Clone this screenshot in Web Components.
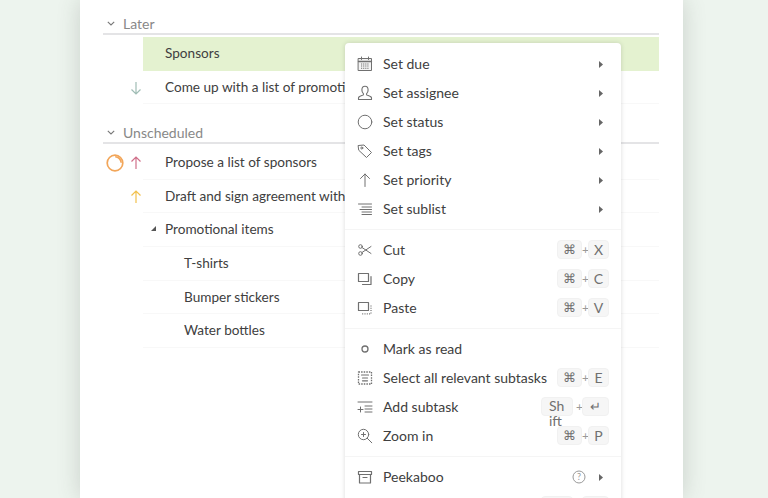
<!DOCTYPE html>
<html><head><meta charset="utf-8">
<style>
html,body{margin:0;padding:0;height:100%;overflow:hidden;background:#edf4ee;font-family:Lato,"Liberation Sans",sans-serif;color:#333}
</style></head><body>
<x-page>
<x-section label="Later">
  <x-row selected>Sponsors</x-row>
  <x-row pri="down">Come up with a list of promotional items</x-row>
</x-section>
<x-section label="Unscheduled">
  <x-row pri="red" timer>Propose a list of sponsors</x-row>
  <x-row pri="yellow">Draft and sign agreement with sponsors</x-row>
  <x-row caret>Promotional items</x-row>
  <x-row sub>T-shirts</x-row>
  <x-row sub>Bumper stickers</x-row>
  <x-row sub>Water bottles</x-row>
</x-section>
<x-menu slot="overlay">
  <x-item icon="cal" arrow>Set due</x-item>
  <x-item icon="user" arrow>Set assignee</x-item>
  <x-item icon="circle" arrow>Set status</x-item>
  <x-item icon="tag" arrow>Set tags</x-item>
  <x-item icon="up" arrow>Set priority</x-item>
  <x-item icon="sublist" arrow>Set sublist</x-item>
  <x-sep></x-sep>
  <x-item icon="cut" keys="⌘|X">Cut</x-item>
  <x-item icon="copy" keys="⌘|C">Copy</x-item>
  <x-item icon="paste" keys="⌘|V">Paste</x-item>
  <x-sep></x-sep>
  <x-item icon="dot">Mark as read</x-item>
  <x-item icon="selall" keys="⌘|E">Select all relevant subtasks</x-item>
  <x-item icon="add" keys="Shift|↵">Add subtask</x-item>
  <x-item icon="zoom" keys="⌘|P">Zoom in</x-item>
  <x-sep></x-sep>
  <x-item icon="box" help arrow>Peekaboo</x-item>
  <x-item keys="|"></x-item>
</x-menu>
</x-page>
<script>
const S='fill="none" stroke="#707070" stroke-width="1" stroke-linecap="round" stroke-linejoin="round"';
const svg=(b,w=16,h=16)=>`<svg width="${w}" height="${h}" viewBox="0 0 16 16" ${S}>${b}</svg>`;
const ICONS={
cal:svg('<rect x="1.500" y="2.500" width="13" height="12" fill="#f3f3f3"/><path d="M1.500 5.500h13" stroke-width="1.300"/><path d="M4.500 1v2.500M11.500 1v2.500"/><path d="M4 8h8M4 10h8M4 12.300h8" stroke-dasharray="1.200 .9" stroke-linecap="butt" stroke-width="1.100"/>'),
user:svg('<path d="M4.900 5C4.900 2.700 6.200 1.300 8 1.300s3.100 1.400 3.100 3.700c0 1.600-.7 3-1.500 3.700v1c0 .8 4.900 1.200 4.900 3.200v1.600H1.500V12.900c0-2 4.900-2.400 4.900-3.200v-1C5.600 8 4.900 6.600 4.900 5Z" stroke-width="1.100"/>'),
circle:svg('<circle cx="8" cy="8" r="6.800"/>'),
tag:svg('<path d="M1.500 2.500 7 2l7.500 7.500-5 5L2 7.500Z"/><circle cx="4.800" cy="5" r="1"/>'),
up:svg('<path d="M8 14.500V2M3.500 6.500 8 2l4.500 4.500"/>'),
sublist:svg('<path d="M1.500 3h13M5 6h9.500M3 8.500h11.500M5 11h9.500M5 13.500h9.500"/>'),
cut:svg('<circle cx="3.500" cy="4.500" r="1.800"/><circle cx="3.500" cy="11.500" r="1.800"/><path d="M5 5.500l9 6M5 10.500l9-6"/>'),
copy:svg('<rect x="1.500" y="2.500" width="10" height="8" stroke-width="1.200"/><path d="M14 5.500v8H5.500" stroke-width="1.200"/>'),
paste:svg('<rect x="1.500" y="2.500" width="10" height="8" stroke-width="1.200"/><path d="M14 5.500v8.300H4" stroke-dasharray="1 1.300" stroke-linecap="butt" stroke-width="1.200"/>'),
dot:svg('<circle cx="8" cy="8" r="3" stroke-width="1.300"/>'),
selall:svg('<rect x="1.500" y="2" width="13" height="12" stroke-dasharray="1.500 1.100" stroke-linecap="butt" stroke-width="1.300"/><path d="M4.500 5h7M5.500 8h5M5.500 10.800h5" stroke-width="1.200"/>'),
add:svg('<path d="M1 3h14M8 7h7M8 10h7M8 13h7M1 10.500h5M3.500 8v5"/>'),
zoom:svg('<circle cx="6.500" cy="6.500" r="5.200"/><path d="M10.200 10.200 14.800 14.800M6.500 4.500v4M4.500 6.500h4"/>'),
box:svg('<path d="M1.500 2.500h13v3h-13Z" stroke-width="1.200"/><path d="M2.500 5.500v8.500h11V5.500M6 8.500h4" stroke-width="1.200"/>')
};
const def=(n,html)=>customElements.define(n,class extends HTMLElement{
  connectedCallback(){ if(this.shadowRoot)return; const r=this.attachShadow({mode:'open'}); r.innerHTML=typeof html==='function'?html(this):html; }
});
def('x-page',`<style>
:host{display:block;position:relative;box-sizing:border-box;width:603px;height:498px;margin-left:80px;padding:14px 24px 0 23px;background:#fff;box-shadow:0 0 22px rgba(60,70,60,.2)}
</style><slot></slot><slot name="overlay"></slot>`);
def('x-section',h=>`<style>
:host{display:block;margin-bottom:19px}
.h{display:flex;align-items:center;height:19px;border-bottom:2px solid #e4e4e6;margin-bottom:2px;font-size:14px;color:#888}
svg{width:8px;height:5px;margin:0 8px 0 4px}
</style><div class="h"><svg viewBox="0 0 8 5" fill="none" stroke="#777" stroke-width="1.100"><path d="M.8.800 4 4l3.200-3.200"/></svg>${h.getAttribute('label')}</div><slot></slot>`);
def('x-row',h=>{
 const p=h.getAttribute('pri'),c={down:'#a0bdb5',red:'#d0708a',yellow:'#f2c14e'}[p];
 const a=p?`<svg class="p" width="12" height="14" viewBox="0 0 12 14" fill="none" stroke="${c}" stroke-width="1.200"><path d="${p==='down'?'M6 1v12M1.500 8.500 6 13l4.500-4.500':'M6 13V1M1.500 5.500 6 1l4.500 4.500'}"/></svg>`:'';
 const t=h.hasAttribute('timer')?`<svg class="t" width="18" height="18" viewBox="0 0 18 18" fill="none" stroke="#f2a65a" stroke-width="1.700"><circle cx="9" cy="9" r="7.800"/><path d="M9.200 2.800A6.200 6.200 0 0 1 15.200 8.800" stroke-width="1.600"/></svg>`:'';
 const car=h.hasAttribute('caret')?`<svg class="c" width="5" height="5" viewBox="0 0 5 5"><path d="M5 0v5H0Z" fill="#555"/></svg>`:'';
 return `<style>
:host{display:block;position:relative;box-sizing:border-box;height:33.600px;margin-left:40px;font-size:13.600px;line-height:32.500px;color:#404040;padding-left:${h.hasAttribute('sub')?41:22}px;white-space:nowrap;border-bottom:1px solid #f8f8f8;${h.hasAttribute('selected')?'background:#e4f2d0;border-bottom-color:#e4f2d0;':''}}
svg{position:absolute}
.p{left:-13px;top:10px}.t{left:-37px;top:8px}.c{left:8px;top:13px}
</style>${t}${a}${car}<slot></slot>`});
def('x-sep',`<style>:host{display:block;height:1px;background:#f5f5f5;margin:5.500px 0}</style>`);
def('x-key',`<style>
:host{display:inline-block;box-sizing:border-box;height:19px;min-width:21px;padding:0 4px;background:#f6f6f6;border:1px solid #f1f1f1;border-radius:4px;font-size:14px;line-height:17px;color:#707070;text-align:center;white-space:normal}
:host([wide]){width:32px;padding:0 6px 0 7px;margin-right:3px;text-align:left;word-break:break-all;line-height:15px}
:host([sym]){width:25px;padding:0;font-size:13px}
:host([ret]){width:27px;padding:0;font-size:13px}
</style><slot></slot>`);
def('x-item',h=>{
 const ic=ICONS[h.getAttribute('icon')]||'';
 let r='';
 if(h.hasAttribute('help')) r+=`<svg class="q" width="14" height="14" viewBox="0 0 14 14" fill="none" stroke="#999"><circle cx="7" cy="7" r="6"/><text x="7" y="10.300" text-anchor="middle" font-size="9" font-family="Lato" fill="#999" stroke="none">?</text></svg>`;
 if(h.hasAttribute('arrow')) r+=`<svg class="a" width="4" height="7" viewBox="0 0 4 7"><path d="M0 0l4 3.500L0 7Z" fill="#666"/></svg>`;
 const k=h.getAttribute('keys');
 if(k){const [a,b]=k.split('|');
   r+=`<span class="keys"><x-key ${a==='⌘'?'sym':'wide'}>${a}</x-key><i>${a?'+':''}</i><x-key ${b==='↵'||!b?'ret':''}>${b}</x-key></span>`;}
 return `<style>
:host{display:flex;align-items:center;height:29px;padding:0 12px;font-size:14px;color:#404040;white-space:nowrap}
.ic{width:16px;height:16px;margin-right:10px;flex:none;display:flex}
.t{flex:1}
.keys{display:flex;align-items:center}
.keys i{font-style:normal;color:#999;font-size:12px;width:6px;text-align:center}
.a{margin:1px 6px 0 13px}
</style><span class="ic">${ic}</span><span class="t"><slot></slot></span>${r}`});
def('x-menu',`<style>
:host{display:block;position:absolute;left:265px;top:43px;width:276px;height:470px;box-sizing:border-box;padding:6px 0;background:#fff;border-radius:4px;box-shadow:0 0 5px rgba(0,0,0,.14)}
</style><slot></slot>`);
</script>
</body></html>
